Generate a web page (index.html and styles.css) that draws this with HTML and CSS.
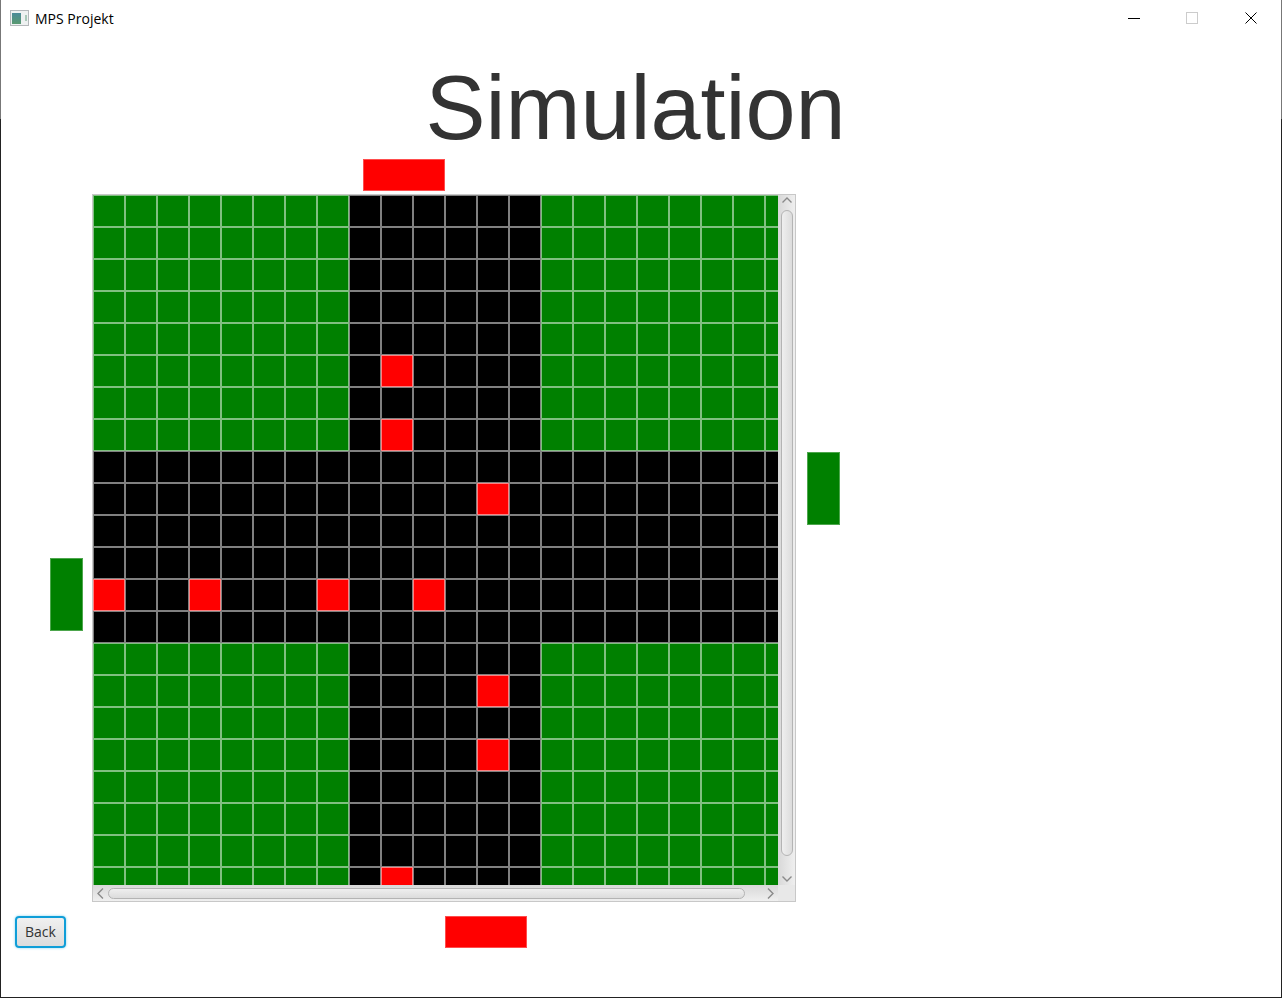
FILE: index.html
```html
<!DOCTYPE html>
<html lang="de">
<head>
    <meta charset="UTF-8">
    <meta name="viewport" content="width=device-width, initial-scale=1.0">
    <title>MPS Projekt</title>
    <link rel="stylesheet" href="styles.css">
</head>
<body>
    <div class="window">
        <div class="titlebar">
            <svg class="app-icon" width="20" height="16" viewBox="0 0 20 16">
                <defs>
                    <linearGradient id="appFill" x1="0" y1="0" x2="0" y2="1">
                        <stop offset="0" stop-color="#4a8a98"/>
                        <stop offset="1" stop-color="#5a9a70"/>
                    </linearGradient>
                </defs>
                <rect x="0.5" y="0.5" width="18" height="15" fill="#eef1f1" stroke="#b4b8bb"/>
                <rect x="2" y="3" width="9" height="11" fill="url(#appFill)"/>
                <rect x="15" y="5" width="2" height="6" fill="#a8c8b8"/>
            </svg>
            <span class="app-title">MPS Projekt</span>
            <div class="win-buttons">
                <svg class="win-btn" width="14" height="14" viewBox="0 0 14 14"><path d="M1 7.5H13" stroke="#000" fill="none"/></svg>
                <svg class="win-btn" width="14" height="14" viewBox="0 0 14 14"><rect x="1.5" y="1.5" width="11" height="11" stroke="#ccc" fill="none"/></svg>
                <svg class="win-btn win-close" width="14" height="14" viewBox="0 0 14 14"><path d="M1.5 1.5L12.5 12.5M12.5 1.5L1.5 12.5" stroke="#000" fill="none"/></svg>
            </div>
        </div>

        <h1 class="heading">Simulation</h1>

        <div class="board">
            <div class="light light-top"></div>
            <div class="light light-left"></div>
            <div class="scrollpane">
                <div class="viewport">
                    <div class="grid" id="grid"></div>
                </div>
                <div class="vbar">
                    <svg class="arrow" width="10" height="6" viewBox="0 0 10 6"><path d="M0.5 5.5L5 1L9.5 5.5" stroke="#8a8a8a" stroke-width="1.4" fill="none"/></svg>
                    <div class="vthumb"></div>
                    <svg class="arrow" width="10" height="6" viewBox="0 0 10 6"><path d="M0.5 0.5L5 5L9.5 0.5" stroke="#8a8a8a" stroke-width="1.4" fill="none"/></svg>
                </div>
                <div class="hbar">
                    <svg class="arrow" width="7" height="11" viewBox="0 0 7 11"><path d="M6 0.5L1 5.5L6 10.5" stroke="#8a8a8a" stroke-width="1.4" fill="none"/></svg>
                    <div class="hthumb"></div>
                    <svg class="arrow" width="7" height="11" viewBox="0 0 7 11"><path d="M1 0.5L6 5.5L1 10.5" stroke="#8a8a8a" stroke-width="1.4" fill="none"/></svg>
                </div>
                <div class="corner"></div>
            </div>
            <div class="light light-right"></div>
            <button class="back-btn">Back</button>
            <div class="light light-bottom"></div>
        </div>
    </div>

    <script>
        const cars = ['9,5', '9,7', '12,9', '0,12', '3,12', '7,12', '10,12', '12,15', '12,17', '9,21'];
        const grid = document.getElementById('grid');
        for (let row = 0; row < 22; row++) {
            for (let col = 0; col < 22; col++) {
                const cell = document.createElement('div');
                const road = (col >= 8 && col < 14) || (row >= 8 && row < 14);
                cell.className = 'cell ' + (cars.includes(col + ',' + row) ? 'car' : road ? 'road' : 'grass');
                grid.appendChild(cell);
            }
        }
    </script>
</body>
</html>
```

FILE: styles.css
```css
html, body {
    margin: 0;
    height: 100%;
    background: #fff;
}
body {
    font-family: "Liberation Sans", Arial, sans-serif;
    overflow: hidden;
}
.window {
    box-sizing: border-box;
    height: 998px;
    border-style: solid;
    border-width: 0 1px 1px 1px;
    border-image: linear-gradient(to bottom, #777 120px, #222 120px) 1;
    background: #fff;
}
.titlebar {
    display: flex;
    align-items: center;
    height: 36px;
    padding-left: 9px;
}
.app-icon {
    margin-right: 5px;
}
.app-title {
    font-family: "Open Sans", sans-serif;
    font-size: 14px;
    color: #000;
}
.win-buttons {
    display: flex;
    gap: 44px;
    margin-left: auto;
    margin-right: 23px;
}
.win-close {
    margin-left: 1px;
}
.heading {
    margin: 0;
    height: 123px;
    box-sizing: border-box;
    padding-top: 21px;
    padding-right: 11px;
    text-align: center;
    font-size: 90px;
    font-weight: normal;
    line-height: 102px;
    color: #333;
}
.board {
    display: grid;
    grid-template-columns: 14px 35px 33px 9px 704px 11px 33px;
    grid-template-rows: 35px 708px 14px 32px;
}
.light {
    border: 1px solid rgba(255, 255, 255, 0.3);
    box-sizing: border-box;
}
.light-top {
    grid-column: 5;
    grid-row: 1;
    width: 82px;
    height: 32px;
    margin-left: 271px;
    background: #f00;
}
.light-left {
    grid-column: 3;
    grid-row: 2;
    width: 33px;
    height: 73px;
    margin-top: 364px;
    background: #008000;
}
.light-right {
    grid-column: 7;
    grid-row: 2;
    width: 33px;
    height: 73px;
    margin-top: 258px;
    background: #008000;
}
.light-bottom {
    grid-column: 5;
    grid-row: 4;
    width: 82px;
    height: 32px;
    margin-left: 353px;
    background: #f00;
}
.scrollpane {
    grid-column: 5;
    grid-row: 2;
    display: grid;
    grid-template-columns: 685px 17px;
    grid-template-rows: 690px 16px;
    border: 1px solid #c8c8c8;
    background: #e8e8e8;
}
.viewport {
    overflow: hidden;
    background: #fff;
}
.grid {
    display: grid;
    grid-template-columns: repeat(22, 32px);
    grid-auto-rows: 32px;
    width: 704px;
}
.cell {
    box-sizing: border-box;
    border: 1px solid rgba(255, 255, 255, 0.5);
}
.grass {
    background-color: #008000;
}
.road {
    background-color: #000;
}
.car {
    background-color: #f00;
}
.vbar {
    display: flex;
    flex-direction: column;
    align-items: center;
    padding: 2px 0 3px;
    box-sizing: border-box;
    background: linear-gradient(to right, #d8d8d8, #efefef);
}
.vthumb {
    box-sizing: border-box;
    width: 12px;
    height: 646px;
    margin: 7px 0 20px;
    border: 1px solid #b4b4b4;
    border-radius: 6px;
    background: linear-gradient(to right, #efefef, #dcdcdc);
}
.hbar {
    display: flex;
    align-items: center;
    padding: 0 4px;
    box-sizing: border-box;
    background: linear-gradient(to bottom, #d8d8d8, #efefef);
}
.hthumb {
    box-sizing: border-box;
    width: 640px;
    height: 11px;
    margin: 0 22px 0 4px;
    border: 1px solid #b4b4b4;
    border-radius: 6px;
    background: linear-gradient(to bottom, #efefef, #dcdcdc);
}
.corner {
    background: #e8e8e8;
}
.back-btn {
    grid-column: 2 / 4;
    grid-row: 4;
    justify-self: start;
    box-sizing: border-box;
    width: 51px;
    height: 32px;
    padding: 0 0 2px;
    font-family: "Open Sans", sans-serif;
    font-size: 14px;
    color: #333;
    border: 2px solid #0f9ed8;
    border-radius: 4px;
    box-shadow: 0 0 2px 1px #c8ecf8;
    background: linear-gradient(to bottom, #f0f0f0, #dcdcdc);
}
```
